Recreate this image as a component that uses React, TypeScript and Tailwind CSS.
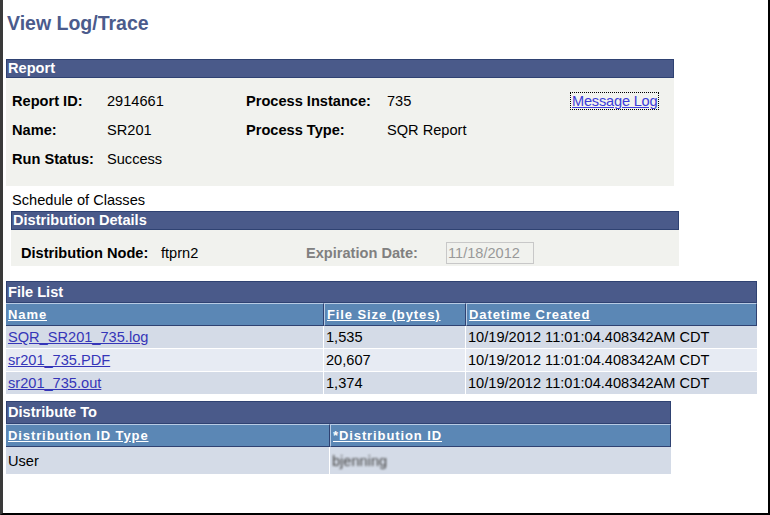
import React from "react";

const font = { fontFamily: '"Liberation Sans", Arial, sans-serif' };

const Bar: React.FC<{ title: string; className?: string }> = ({ title, className }) => (
  <div
    className={`bg-[#4a5a8a] border border-[#2f4272] text-white font-bold text-[14.6px] leading-[17px] px-[1px] ${className ?? ""}`}
  >
    {title}
  </div>
);

const files = [
  { name: "SQR_SR201_735.log", size: "1,535", bg: "bg-[#d4dbe7]" },
  { name: "sr201_735.PDF", size: "20,607", bg: "bg-[#e7ebf3]" },
  { name: "sr201_735.out", size: "1,374", bg: "bg-[#d4dbe7]" },
];

const head =
  "bg-[#5b87b5] border-t border-t-[#b8cbe4] border-b border-b-[#2f4272] border-r border-r-[#2f4272] h-[23px] px-[2px] leading-[21px] font-bold text-white underline tracking-[0.9px]";

export default function App() {
  return (
    <div
      style={font}
      className="w-[770px] h-[515px] bg-white border-l-[3px] border-l-[#3a3a3a] border-r-2 border-r-black border-b-2 border-b-black text-[14.6px] text-black overflow-hidden"
    >
      <div className="pl-[3px] pt-[12px]">
        <h1 className="text-[19.5px] font-bold text-[#4b5b8c] leading-[23px] pl-[1px]">View Log/Trace</h1>

        <div className="w-[668px] mt-[24px]">
          <Bar title="Report" className="h-[19px]" />
          <div className="bg-[#f1f2ee] h-[108px] pt-[13px] pl-[6px] grid content-start grid-cols-[95px_139px_141px_184px_auto] gap-y-[9px] leading-[20px]">
            <span className="font-bold">Report ID:</span>
            <span>2914661</span>
            <span className="font-bold">Process Instance:</span>
            <span>735</span>
            <span>
              <a className="text-[#3c3cd8] underline outline-1 outline-dotted outline-black px-[1px] tracking-[-0.2px]">Message Log</a>
            </span>
            <span className="font-bold">Name:</span>
            <span>SR201</span>
            <span className="font-bold">Process Type:</span>
            <span>SQR Report</span>
            <span />
            <span className="font-bold">Run Status:</span>
            <span>Success</span>
          </div>
        </div>

        <div className="pl-[6px] mt-[5px] leading-[18px]">Schedule of Classes</div>

        <div className="w-[668px] ml-[5px] mt-[2px]">
          <Bar title="Distribution Details" className="h-[19px]" />
          <div className="bg-[#f1f2ee] h-[36px] pt-[9px] flex items-center leading-[22px]">
            <span className="font-bold pl-[10px] w-[150px]">Distribution Node:</span>
            <span className="w-[145px]">ftprn2</span>
            <span className="font-bold text-[#808080] w-[140px]">Expiration Date:</span>
            <span className="w-[88px] h-[22px] border border-[#c8c8c8] bg-[#f1f2ee] text-[#999] px-[1px] leading-[20px]">
              11/18/2012
            </span>
          </div>
        </div>

        <div className="w-[751px] mt-[15px]">
          <Bar title="File List" className="h-[22px] leading-[20px]" />
          <div className="grid grid-cols-[318px_142px_1fr] text-[13px]">
            <div className={head}>Name</div>
            <div className={`${head} border-l border-l-[#b8cbe4]`}>File Size (bytes)</div>
            <div className={`${head} border-l border-l-[#b8cbe4]`}>Datetime Created</div>
            {files.map((f) => (
              <React.Fragment key={f.name}>
                <div className={`${f.bg} h-[23px] border-b border-b-white border-r border-r-white px-[2px] leading-[23px] text-[14.6px]`}>
                  <a className="text-[#3535b8] underline">{f.name}</a>
                </div>
                <div className={`${f.bg} h-[23px] border-b border-b-white border-r border-r-white px-[2px] leading-[23px] text-[14.6px]`}>{f.size}</div>
                <div className={`${f.bg} h-[23px] border-b border-b-white px-[2px] leading-[23px] text-[14.6px]`}>10/19/2012 11:01:04.408342AM CDT</div>
              </React.Fragment>
            ))}
          </div>
        </div>

        <div className="w-[665px] mt-[6px]">
          <Bar title="Distribute To" className="h-[23px] leading-[21px]" />
          <div className="grid grid-cols-[324px_1fr] text-[13px]">
            <div className={head}>Distribution ID Type</div>
            <div className={`${head} border-l border-l-[#b8cbe4]`}>*Distribution ID</div>
            <div className="bg-[#d4dbe7] h-[27px] border-r border-r-white px-[2px] leading-[28px] text-[14.6px]">User</div>
            <div className="bg-[#d4dbe7] h-[27px] px-[2px] leading-[28px] text-[14.6px]">
              <span className="text-[#444] blur-[1.3px]">bjenning</span>
            </div>
          </div>
        </div>
      </div>
    </div>
  );
}
